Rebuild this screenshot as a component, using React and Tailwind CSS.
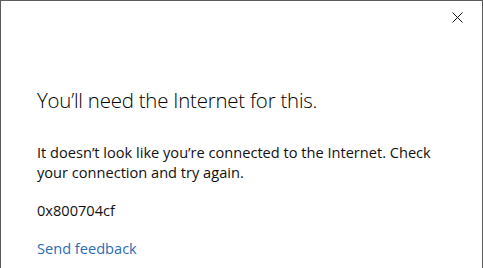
export default function App() {
  return (
    <div className="w-[483px] h-[268px] overflow-hidden bg-white border-l border-t border-r border-[#5a5a5a] text-[#000] flex flex-col" style={{ fontFamily: '"Open Sans", "Noto Sans", sans-serif' }}>
      <div className="flex justify-end pt-[11px] pr-[19px]">
        <svg width="11" height="11" viewBox="0 0 11 11" fill="none" stroke="#111" strokeWidth="1">
          <path d="M0.5 0.5 L10.5 10.5 M10.5 0.5 L0.5 10.5" />
        </svg>
      </div>
      <div className="pl-[36px] pr-4 pt-[63px]">
        <h1 className="text-[20.4px] font-light leading-[28px] tracking-[-0.2px]">You’ll need the Internet for this.</h1>
        <p className="mt-[28px] text-[14.6px] leading-[20px] text-[#111]">
          It doesn’t look like you’re connected to the Internet. Check
          <br />
          your connection and try again.
        </p>
        <p className="mt-[18px] text-[14.6px] leading-[20px] text-[#111]">0x800704cf</p>
        <p className="mt-[18px] text-[14.6px] leading-[20px] text-[#2b6cb5]">Send feedback</p>
      </div>
    </div>
  );
}
